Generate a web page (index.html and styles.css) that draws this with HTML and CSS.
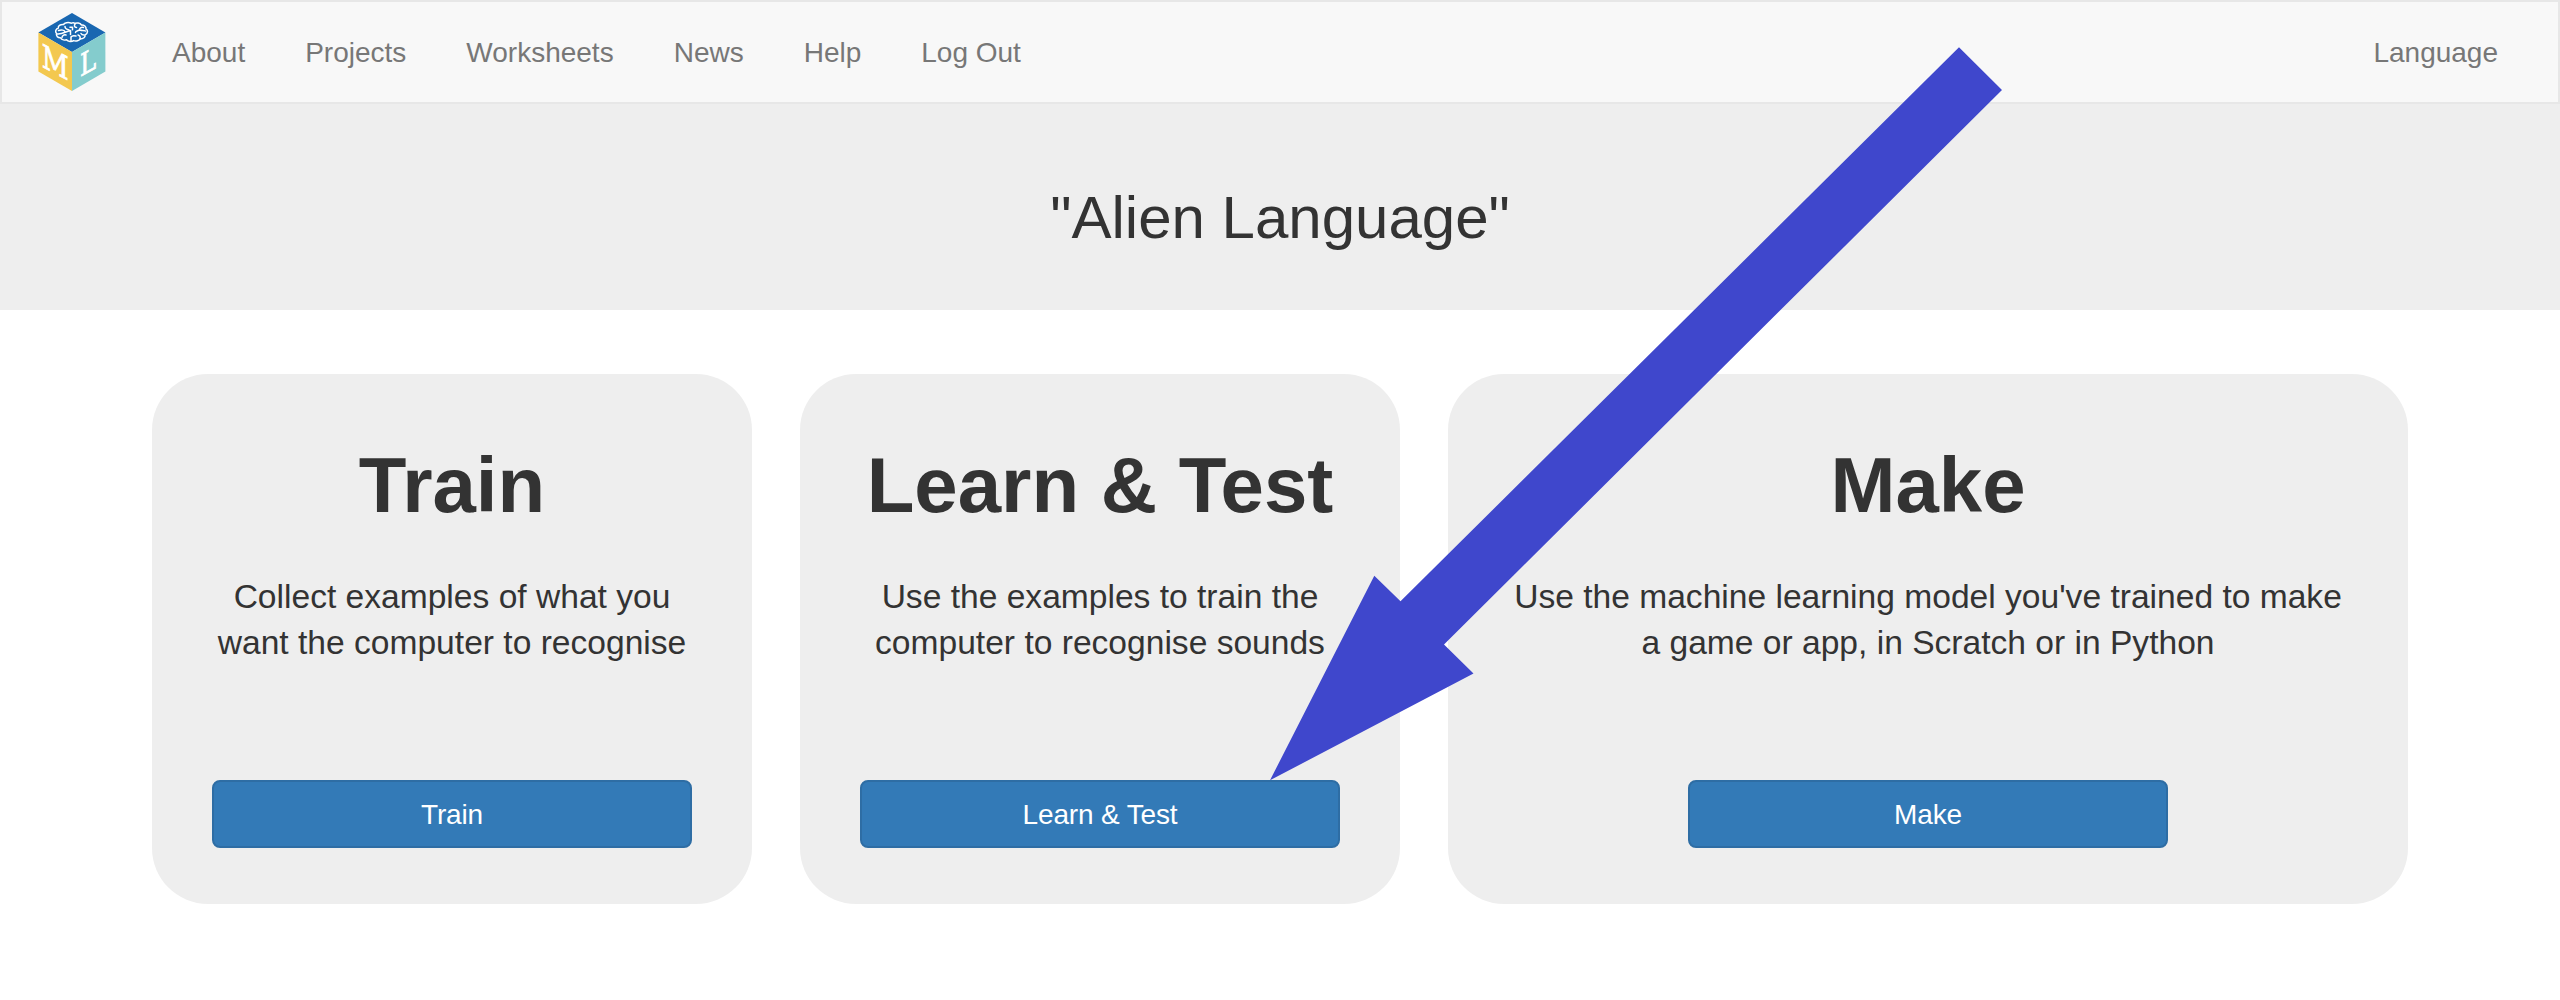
FILE: index.html
```html
<!DOCTYPE html>
<html lang="en">
<head>
<meta charset="utf-8">
<title>Alien Language</title>
<link rel="stylesheet" href="styles.css">
</head>
<body>
<nav class="navbar">
  <a class="brand" aria-label="Home">
    <svg class="logo" viewBox="0 0 68 78">
      <path fill="#1967b1" d="M34 0 67.4 19.5 34 39 .4 19.5z"/>
      <path fill="#f3c84f" d="M.4 19.5 34 39v39L.4 58.5z"/>
      <path fill="#84cccd" d="M67.4 19.5 34 39v39l33.400-19.500z"/>
      <g class="brain">
        <path d="M33.500 10.200C30 9 26.500 9.800 25.500 11.500C22 11.300 20 13 20.300 15C17.500 16 17 19 18.500 20.300C17.800 23 20 25 22.500 24.800C24 27 27 27.300 28.500 26.800C30 28.800 34 28.800 35.500 27.600C38 28.600 41.500 27.500 42 26C45.500 26 47.500 24 47 22C50.300 20.500 50 17 48 16C48.500 13.500 46 11.800 43.500 12C42 9.800 38.500 9.500 37 10.300C36 9.800 34.500 9.700 33.500 10.200z"/>
        <path d="M32 14.200h2.500v2.500M27 13.500c0 2 2 3 4 3.500M20.500 17.500c3-1 6-.5 6.500 1.500M19.500 21c3.500 .5 8-2 13-3.500v4M24 24.500c0-2 2-3 4-2.500M33 28v-4c1-1.500 3-1.500 5-1M37.500 10.500c-2 2-1 4 1 4M45.500 14.500c-2.500-.5-4 .5-4 2.500c-2 1-4 1-4 2.500M42 17c2 1 4 0 5.500 1M42 26c.5-2 0-3.500-2-4M46 22c-1.500 0-2.500-.5-3-1.500"/>
      </g>
      <text class="logo-letter" transform="matrix(.82 .43 0 1 3.700 53.600)">M</text>
      <text class="logo-letter" transform="matrix(.76 -.42 0 .96 42 63.900)">L</text>
    </svg>
  </a>
  <a class="nav-link">About</a>
  <a class="nav-link">Projects</a>
  <a class="nav-link">Worksheets</a>
  <a class="nav-link">News</a>
  <a class="nav-link">Help</a>
  <a class="nav-link">Log Out</a>
  <a class="nav-link nav-right">Language</a>
</nav>
<header class="banner">
  <h1 class="project-name">"Alien Language"</h1>
</header>
<main class="cards">
  <section class="card">
    <h2 class="card-title">Train</h2>
    <p class="card-text">Collect examples of what you<br>want the computer to recognise</p>
    <button class="btn">Train</button>
  </section>
  <section class="card">
    <h2 class="card-title">Learn &amp; Test</h2>
    <p class="card-text">Use the examples to train the<br>computer to recognise sounds</p>
    <button class="btn">Learn &amp; Test</button>
  </section>
  <section class="card card-wide">
    <h2 class="card-title">Make</h2>
    <p class="card-text">Use the machine learning model you've trained to make<br>a game or app, in Scratch or in Python</p>
    <button class="btn">Make</button>
  </section>
</main>
<svg class="pointer" viewBox="0 0 2560 1000" aria-hidden="true">
  <path d="M1270 780.300 1374.300 575.700 1400.500 601.300 1959 47.300 2002 90 1444 644.500 1473.500 673.500z"/>
</svg>
</body>
</html>
```
FILE: styles.css
```css
* {
  box-sizing: border-box;
}

body {
  margin: 0;
  position: relative;
  height: 1000px;
  overflow: hidden;
  background: #fff;
  color: #333;
  font-family: "Liberation Sans", Arial, sans-serif;
  font-size: 28px;
}

.navbar {
  display: flex;
  align-items: center;
  height: 104px;
  padding: 0 30px 0 36px;
  background: #f8f8f8;
  border: 2px solid #e7e7e7;
}

.brand {
  display: flex;
  margin-right: 36px;
}

.logo {
  width: 68px;
  height: 78px;
}

.logo-letter {
  fill: #fff;
  stroke: #fff;
  stroke-width: 0.8;
  font-family: "DejaVu Serif", serif;
  font-size: 32px;
}

.brain {
  fill: none;
  stroke: #fff;
  stroke-width: 1.5;
  stroke-linecap: round;
  stroke-linejoin: round;
}

.nav-link {
  padding: 2px 30px 0;
  line-height: 40px;
  color: #777;
}

.nav-right {
  margin-left: auto;
}

.banner {
  height: 206px;
  padding-top: 81px;
  background: #eee;
  text-align: center;
}

.project-name {
  margin: 0;
  font-size: 60px;
  font-weight: 400;
  line-height: 66px;
}

.cards {
  display: flex;
  justify-content: center;
  gap: 48px;
  padding-top: 64px;
}

.card {
  display: flex;
  flex-direction: column;
  align-items: center;
  width: 600px;
  height: 530px;
  padding: 66px 0 56px;
  border-radius: 56px;
  background: #eee;
  text-align: center;
}

.card-wide {
  width: 960px;
}

.card-title {
  margin: 0 0 44px;
  font-size: 78px;
  line-height: 90px;
}

.card-text {
  margin: 0;
  font-size: 33.6px;
  line-height: 46px;
}

.btn {
  width: 480px;
  height: 68px;
  margin-top: auto;
  padding: 2px 0 0;
  border: 2px solid #2e6da4;
  border-radius: 8px;
  background: #337ab7;
  color: #fff;
  font: inherit;
  line-height: 40px;
  letter-spacing: -0.15px;
}

.pointer {
  position: absolute;
  top: 0;
  left: 0;
  width: 2560px;
  height: 1000px;
  fill: #3f47cc;
  pointer-events: none;
}
```
